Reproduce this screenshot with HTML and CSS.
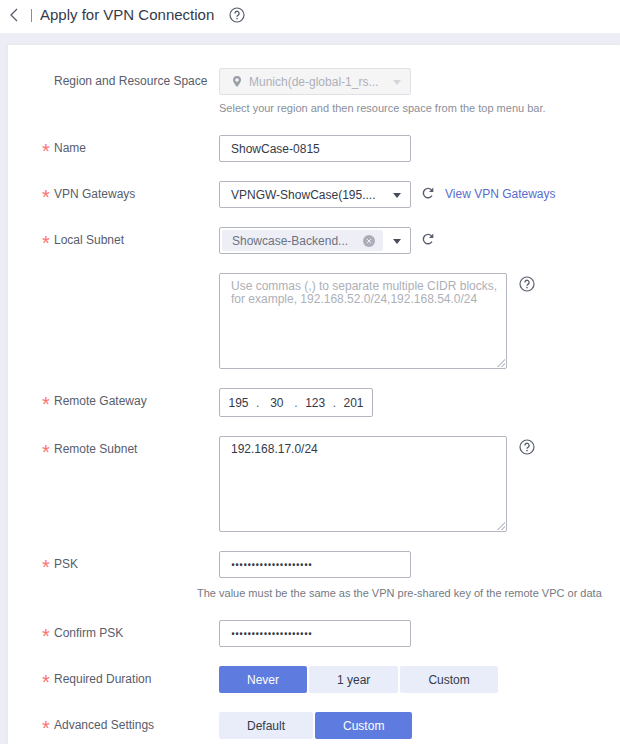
FILE: index.html
```html
<!DOCTYPE html>
<html lang="en">
<head>
  <meta charset="UTF-8">
  <meta name="viewport" content="width=device-width, initial-scale=1.0">
  <title>Apply for VPN Connection</title>
  <link rel="stylesheet" href="styles.css">
</head>
<body>
  <svg class="sprite" aria-hidden="true">
    <symbol id="icon-help" viewBox="0 0 16 16">
      <circle cx="8" cy="8" r="7" fill="none" stroke="currentColor" stroke-width="1.2"/>
      <path d="M5.9 6.4a2.1 2.1 0 1 1 3.3 1.7C8.4 8.6 8 8.900 8 9.800" fill="none" stroke="currentColor" stroke-width="1.3"/>
      <rect x="7.3" y="10.900" width="1.4" height="1.4" fill="currentColor"/>
    </symbol>
    <symbol id="icon-refresh" viewBox="0 0 12 12">
      <path d="M10 8.600A4.700 4.700 0 1 1 9.800 3.200" fill="none" stroke="currentColor" stroke-width="1.4"/>
      <path d="M11.300.6v4.300H7z" fill="currentColor"/>
    </symbol>
  </svg>

  <header class="header">
    <a class="back" href="#" aria-label="Back">
      <svg width="8" height="14" viewBox="0 0 8 14"><path d="M7 1L1 7l6 6" fill="none" stroke="currentColor" stroke-width="1.3"/></svg>
    </a>
    <span class="divider"></span>
    <h1>Apply for VPN Connection</h1>
    <button class="icon-btn" type="button" aria-label="Help"><svg class="help-icon"><use href="#icon-help"/></svg></button>
  </header>

  <main class="main">
    <form class="card">
      <div class="row">
        <label class="label" for="region">Region and Resource Space</label>
        <div class="field">
          <div class="select disabled">
            <svg class="pin" width="8" height="11" viewBox="0 0 8 11"><path fill-rule="evenodd" d="M4 0a4 4 0 0 1 4 4c0 2.600-4 7-4 7S0 6.600 0 4a4 4 0 0 1 4-4zm0 2.200a1.800 1.800 0 1 0 0 3.600 1.800 1.800 0 0 0 0-3.600z" fill="currentColor"/></svg>
            <select id="region" disabled>
              <option>Munich(de-global-1_rs...</option>
            </select>
          </div>
          <p class="hint">Select your region and then resource space from the top menu bar.</p>
        </div>
      </div>

      <div class="row">
        <label class="label required" for="name">Name</label>
        <div class="field">
          <input class="input" id="name" type="text" value="ShowCase-0815">
        </div>
      </div>

      <div class="row">
        <label class="label required" for="gateway">VPN Gateways</label>
        <div class="field inline">
          <div class="select">
            <select id="gateway">
              <option>VPNGW-ShowCase(195....</option>
            </select>
          </div>
          <button class="icon-btn refresh" type="button" aria-label="Refresh gateways"><svg class="refresh-icon"><use href="#icon-refresh"/></svg></button>
          <a class="link" href="#">View VPN Gateways</a>
        </div>
      </div>

      <div class="row">
        <label class="label required" for="subnet">Local Subnet</label>
        <div class="field inline">
          <div class="select multi">
            <span class="tag">
              Showcase-Backend...
              <button class="icon-btn" type="button" aria-label="Remove">
                <svg width="12" height="12" viewBox="0 0 12 12"><circle cx="6" cy="6" r="6" fill="#abaeb9"/><path d="M3.800 3.800l4.400 4.400M8.200 3.800L3.800 8.200" stroke="#eeeff6"/></svg>
              </button>
            </span>
            <select id="subnet"><option value="" aria-label="Subnets"></option></select>
          </div>
          <button class="icon-btn refresh" type="button" aria-label="Refresh subnets"><svg class="refresh-icon"><use href="#icon-refresh"/></svg></button>
        </div>
      </div>

      <div class="row">
        <span class="label"></span>
        <div class="field inline top">
          <textarea class="textarea" aria-label="Local CIDR blocks" placeholder="Use commas (,) to separate multiple CIDR blocks, for example, 192.168.52.0/24,192.168.54.0/24"></textarea>
          <button class="icon-btn" type="button" aria-label="Help"><svg class="help-icon"><use href="#icon-help"/></svg></button>
        </div>
      </div>

      <div class="row">
        <label class="label required" for="ip1">Remote Gateway</label>
        <div class="field">
          <div class="ip">
            <input id="ip1" type="text" value="195"><span>.</span>
            <input type="text" value="30" aria-label="Second octet"><span>.</span>
            <input type="text" value="123" aria-label="Third octet"><span>.</span>
            <input type="text" value="201" aria-label="Fourth octet">
          </div>
        </div>
      </div>

      <div class="row">
        <label class="label required" for="remote">Remote Subnet</label>
        <div class="field inline top">
          <textarea class="textarea" id="remote">192.168.17.0/24</textarea>
          <button class="icon-btn" type="button" aria-label="Help"><svg class="help-icon"><use href="#icon-help"/></svg></button>
        </div>
      </div>

      <div class="row">
        <label class="label required" for="psk">PSK</label>
        <div class="field">
          <input class="input" id="psk" type="password" value="showcase-psk-0815-vp">
          <p class="hint wide">The value must be the same as the VPN pre-shared key of the remote VPC or data</p>
        </div>
      </div>

      <div class="row">
        <label class="label required" for="psk2">Confirm PSK</label>
        <div class="field">
          <input class="input" id="psk2" type="password" value="showcase-psk-0815-vp">
        </div>
      </div>

      <div class="row">
        <span class="label required" id="duration">Required Duration</span>
        <div class="field buttons" role="group" aria-labelledby="duration">
          <button class="option active" type="button">Never</button>
          <button class="option" type="button">1 year</button>
          <button class="option" type="button">Custom</button>
        </div>
      </div>

      <div class="row">
        <span class="label required" id="advanced">Advanced Settings</span>
        <div class="field buttons" role="group" aria-labelledby="advanced">
          <button class="option" type="button">Default</button>
          <button class="option active" type="button">Custom</button>
        </div>
      </div>
    </form>
  </main>
</body>
</html>
```

FILE: styles.css
```css
* {
  box-sizing: border-box;
}

body {
  margin: 0;
  min-height: 100vh;
  display: flex;
  flex-direction: column;
  background-color: #edeef5;
  color: #575d6c;
  font-family: "Liberation Sans", Arial, sans-serif;
  font-size: 12px;
}

input,
select,
textarea,
button {
  font: inherit;
  color: #343a49;
}

.sprite {
  display: none;
}

.header {
  display: flex;
  align-items: center;
  height: 33px;
  padding: 0 10px 4px;
  background-color: #fff;
}

.back {
  display: flex;
  color: #575d6c;
}

.divider {
  width: 1px;
  height: 13px;
  margin: 2px 8px 0 13px;
  background-color: #8a8e99;
}

h1 {
  margin: 0 15px 0 0;
  color: #343a49;
  font-size: 15px;
  font-weight: normal;
}

.icon-btn {
  display: flex;
  padding: 0;
  border: 0;
  background: none;
  color: #575d6c;
  cursor: pointer;
}

.help-icon {
  width: 16px;
  height: 16px;
}

.refresh-icon {
  width: 12px;
  height: 12px;
}

.main {
  flex: 1;
  display: flex;
  padding: 12px 0 0 8px;
}

.card {
  flex: 1;
  min-width: 0;
  display: flex;
  flex-direction: column;
  gap: 19px;
  padding: 23px 0 4px 34px;
  overflow: hidden;
  background-color: #fff;
  box-shadow: 0 0 4px #dfe1e6;
}

.row {
  display: flex;
}

.label {
  flex: 0 0 177px;
  padding-left: 12px;
  line-height: 27px;
}

.required {
  padding-left: 0;
}

.required::before {
  content: "*";
  display: inline-block;
  width: 12px;
  color: #fa7373;
  font-size: 20px;
  line-height: 12px;
  vertical-align: -6px;
}

.field {
  flex: 1;
  min-width: 0;
}

.inline {
  display: flex;
  align-items: center;
}

.top {
  align-items: flex-start;
}

.top .icon-btn {
  margin: 3px 0 0 12px;
}

.input,
.select {
  display: flex;
  align-items: center;
  width: 192px;
  height: 27px;
  border: 1px solid #b3b6c0;
  border-radius: 2px;
  background-color: #fff;
}

.input {
  padding: 0 11px;
}

.input[type="password"] {
  font-family: Roboto, sans-serif;
}

.select {
  position: relative;
}

.select select {
  flex: 1;
  min-width: 0;
  height: 25px;
  padding: 0 11px;
  border: 0;
  background: none;
  appearance: none;
}

.select::after {
  content: "";
  position: absolute;
  right: 9px;
  top: 11px;
  border: 4px solid transparent;
  border-top: 5px solid #464c59;
  border-bottom: 0;
  pointer-events: none;
}

.select.disabled {
  border-color: #dfe1e6;
  background-color: #f5f5f6;
}

.disabled select {
  color: #adb0b8;
  opacity: 1;
}

.disabled::after {
  border-top-color: #d3d5db;
}

.pin {
  margin-left: 13px;
  margin-right: -3px;
  color: #9b9fa8;
}

.tag {
  flex: 0 0 161px;
  display: flex;
  align-items: center;
  justify-content: space-between;
  height: 21px;
  margin-left: 2px;
  padding: 0 8px 0 10px;
  border-radius: 2px;
  background-color: #eeeff6;
  color: #6c7280;
}

.multi select {
  padding: 0;
}

.refresh {
  margin: 0 11px;
  padding-bottom: 4px;
}

.link {
  padding-bottom: 2px;
  color: #5a6cd0;
  text-decoration: none;
}

.hint {
  margin: 6px 0 0;
  color: #8a8e99;
  font-size: 11px;
  line-height: 15px;
}

.wide {
  margin: 8px 0 0 -22px;
  color: #747983;
  white-space: nowrap;
}

.textarea {
  display: block;
  width: 288px;
  height: 96px;
  padding: 6px 5px 6px 11px;
  border: 1px solid #b3b6c0;
  border-radius: 2px;
  line-height: 13px;
}

.textarea::placeholder {
  color: #adb0b8;
}

.textarea::-webkit-resizer {
  background: linear-gradient(135deg, transparent 50%, #c8cad1 50% 60%, transparent 60% 72%, #c8cad1 72% 82%, transparent 82%) right 1px bottom 1px / 8px 8px no-repeat;
}

.ip {
  display: flex;
  align-items: center;
  width: 154px;
  height: 29px;
  padding: 0 1px;
  border: 1px solid #b3b6c0;
  border-radius: 2px;
}

.ip input {
  flex: 1;
  min-width: 0;
  padding: 0;
  border: 0;
  text-align: center;
}

.buttons {
  display: flex;
  gap: 2px;
}

.option {
  height: 27px;
  padding: 0 28px;
  border: 0;
  border-radius: 2px;
  background-color: #e9edfa;
}

.active {
  background-color: #5e7ce0;
  color: #fff;
}
```
